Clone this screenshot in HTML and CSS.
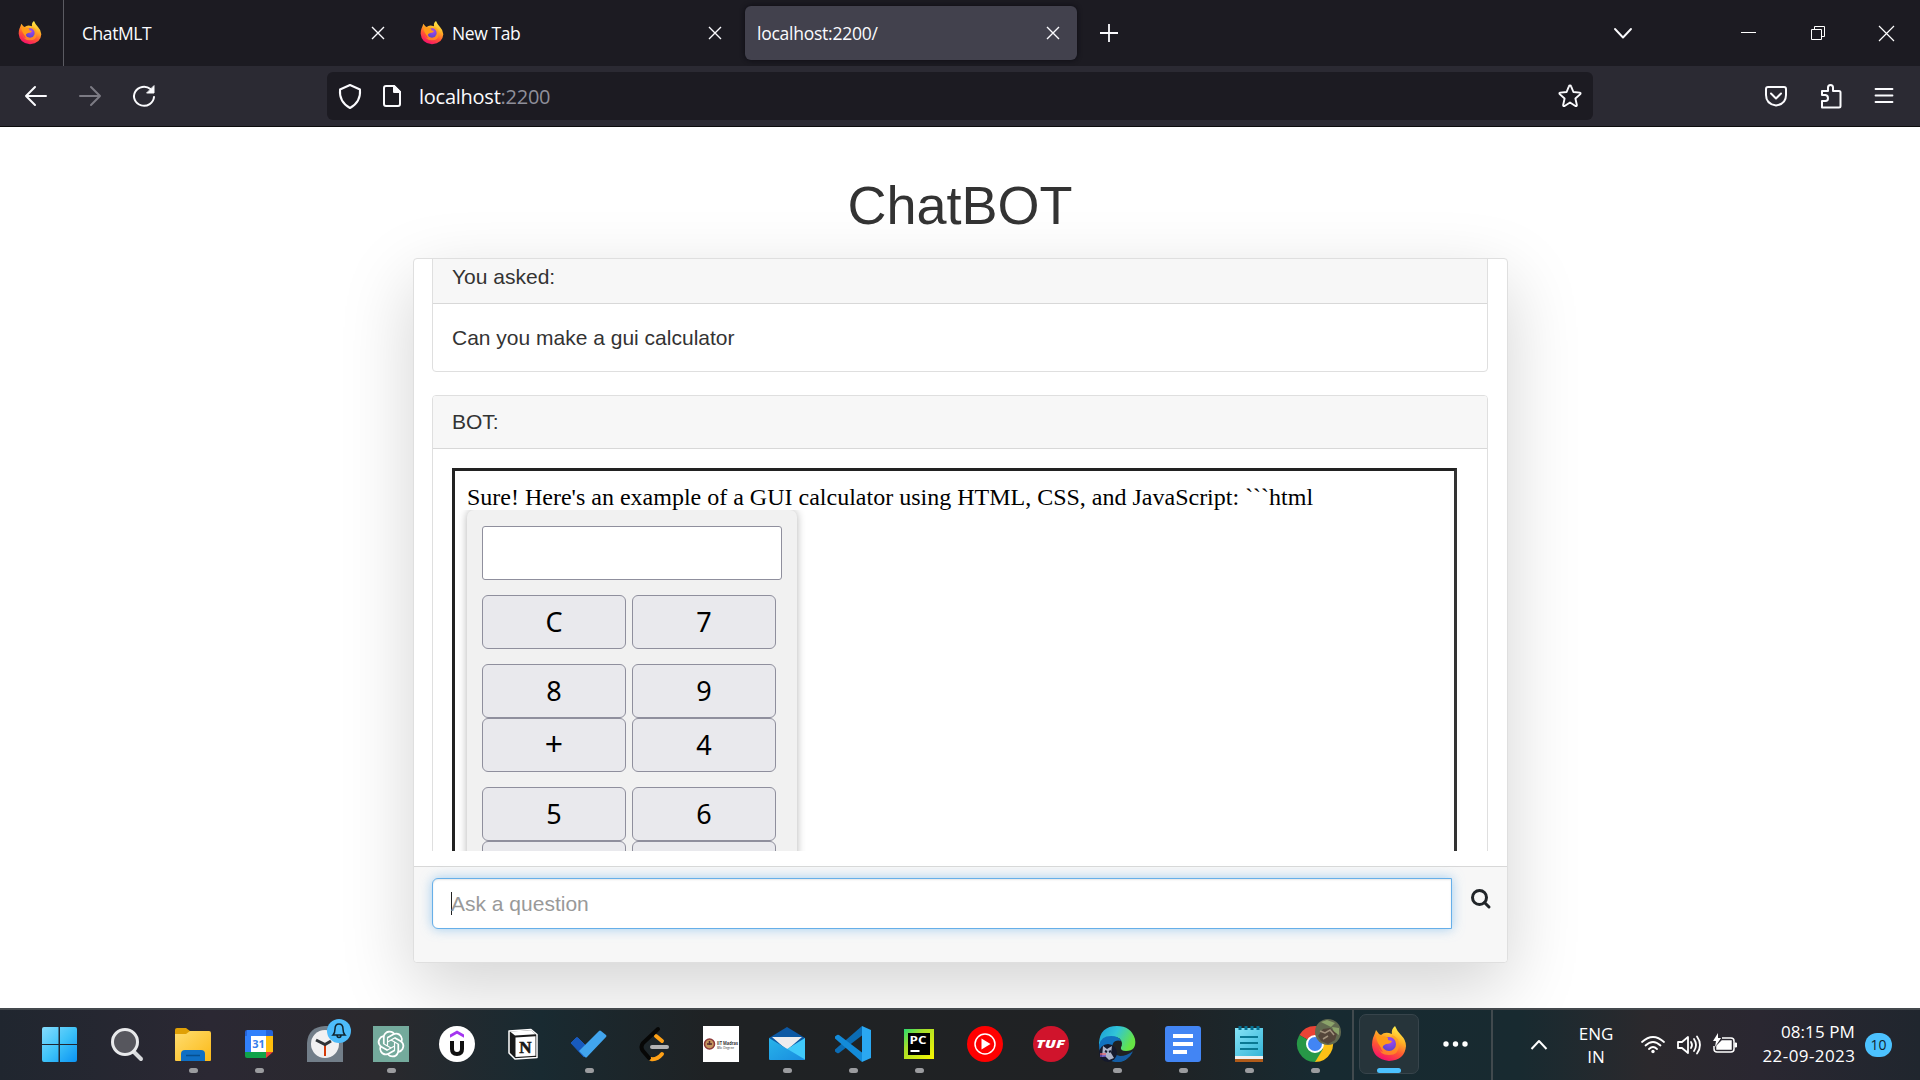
FILE: index.html
```html
<!DOCTYPE html>
<html lang="en">
<head>
<meta charset="utf-8">
<title>ChatBOT</title>
<link rel="stylesheet" href="styles.css">
</head>
<body>
<svg class="defs" width="0" height="0" aria-hidden="true">
  <defs>
    <linearGradient id="ffBody" x1=".75" y1="0" x2=".3" y2="1"><stop offset="0" stop-color="#fff44f"/><stop offset=".35" stop-color="#ffb025"/><stop offset=".65" stop-color="#ff5634"/><stop offset="1" stop-color="#f50970"/></linearGradient>
    <radialGradient id="ffGlobe" cx=".6" cy=".3" r=".8"><stop offset="0" stop-color="#a646f5"/><stop offset="1" stop-color="#5146c4"/></radialGradient>
    <linearGradient id="win" x1="0" y1="0" x2="1" y2="1"><stop offset="0" stop-color="#86dcfd"/><stop offset=".5" stop-color="#3fc3f8"/><stop offset="1" stop-color="#0a93f3"/></linearGradient>
    <linearGradient id="fold" x1="0" y1="0" x2="1" y2="1"><stop offset="0" stop-color="#ffdd70"/><stop offset="1" stop-color="#fbb917"/></linearGradient>
    <linearGradient id="edgeTop" x1="0" y1="0" x2="1" y2=".4"><stop offset="0" stop-color="#199bd8"/><stop offset=".5" stop-color="#31c5d8"/><stop offset="1" stop-color="#65e445"/></linearGradient>
    <linearGradient id="mailA" x1="0" y1="0" x2="1" y2="1"><stop offset="0" stop-color="#28b4ea"/><stop offset="1" stop-color="#198cdf"/></linearGradient>
    <linearGradient id="note" x1="0" y1="0" x2="1" y2="1"><stop offset="0" stop-color="#86e3f6"/><stop offset="1" stop-color="#35b5d8"/></linearGradient>
    <linearGradient id="pc" x1="0" y1="0" x2="1" y2="1"><stop offset="0" stop-color="#27dc70"/><stop offset=".35" stop-color="#a8df29"/><stop offset="1" stop-color="#faf500"/></linearGradient>
    <symbol id="firefox" viewBox="0 0 36 36">
      <path d="M2 12 4 7l1-3 3 4 2 1q3-3 8-2l3 1q-1-5 3-8 2 5 6 9 5 5 5 11-1 14-17 15Q2 33 1 19q0-4 1-7z" fill="url(#ffBody)"/>
      <path d="M21 9q7 2 7 10 0 10-10 10Q8 29 7 19q1 6 5 7-5-7-1-12 5 3 9-1z" fill="#ff9b20" opacity=".7"/>
      <circle cx="18" cy="18" r="7" fill="url(#ffGlobe)"/>
      <path d="M5 9q3 0 6 2 3-2 6 1l0 2 4 1q-1 3-6 3-3 1-4 4-5-4-6-12z" fill="#ff9b17"/>
    </symbol>
    <symbol id="close" viewBox="0 0 14 14"><path d="M1 1 13 13M13 1 1 13" fill="none" stroke="#fbfbfe" stroke-width="1.4"/></symbol>
  </defs>
</svg>

<header class="browser">
  <div class="tabs">
    <div class="pinned"><svg class="favicon"><use href="#firefox"/></svg></div>
    <div class="tab tab-first"><span class="tab-title t1">ChatMLT</span><svg class="x"><use href="#close"/></svg></div>
    <div class="tab tab-second"><svg class="favicon"><use href="#firefox"/></svg><span class="tab-title t2">New Tab</span><svg class="x"><use href="#close"/></svg></div>
    <div class="tab tab-active"><span class="tab-title t3">localhost:2200/</span><svg class="x"><use href="#close"/></svg></div>
    <svg class="plus" width="20" height="20" fill="none" stroke="#fbfbfe" stroke-width="1.8"><path d="M10 1v18M1 10h18"/></svg>
    <div class="window-controls">
      <svg width="20" height="20" fill="none" stroke="#fbfbfe" stroke-width="1.9" stroke-linecap="round" stroke-linejoin="round"><path d="m2 6 8 8.500 8-8.500"/></svg>
      <svg class="minimize" width="16" height="20" stroke="#fff"><path d="M0 9.500h15"/></svg>
      <svg class="restore" width="16" height="16" fill="none" stroke="#fff"><path d="M1.500 4.500h10v10h-10zM4.500 4V1.500h10v10H12"/></svg>
      <svg class="win-close" width="17" height="17" fill="none" stroke="#fff" stroke-width="1.200"><path d="m1 1 15 15M16 1 1 16"/></svg>
    </div>
  </div>
  <div class="toolbar">
    <div class="nav">
      <svg width="24" height="24" fill="none" stroke="#fbfbfe" stroke-width="2" stroke-linecap="round" stroke-linejoin="round"><path d="M22 12H2m9-9-9 9 9 9"/></svg>
      <svg width="24" height="24" fill="none" stroke="#7c7b84" stroke-width="2" stroke-linecap="round" stroke-linejoin="round"><path d="M2 12h20m-9-9 9 9-9 9"/></svg>
      <svg width="24" height="24" fill="none" stroke="#fbfbfe" stroke-width="2" stroke-linecap="round"><path d="M22 13a10 9.500 0 1 1-3.500-8"/><path d="M22 2v7h-7z" fill="#fbfbfe" stroke-width="1"/></svg>
    </div>
    <div class="urlbar">
      <svg width="24" height="26" fill="none" stroke="#fbfbfe" stroke-width="2" stroke-linejoin="round"><path d="M12 2 22 6.500Q23 19 12 25 1 19 2 6.500z"/></svg>
      <svg class="page-icon" width="20" height="24" fill="none" stroke="#fbfbfe" stroke-width="2" stroke-linejoin="round"><path d="M4 2h8l6 6v12q0 2-2 2H4q-2 0-2-2V4q0-2 2-2z"/><path d="M12 2v6h6z" fill="#fbfbfe"/></svg>
      <div class="address">localhost<span>:2200</span></div>
      <svg class="star" width="26" height="26" fill="none" stroke="#fbfbfe" stroke-width="1.900" stroke-linejoin="round"><path d="M13 2.500q.8 0 1.100.8l2.300 5.700 6.400.6q1.300.4.500 1.500l-4.900 4.400 1.500 6.700q-.2 1.300-1.500.8L13 19.500 7.600 23q-1.300.5-1.500-.8l1.500-6.700-4.900-4.400q-.8-1.100.5-1.500L9.600 9l2.300-5.700q.3-.8 1.100-.8z"/></svg>
    </div>
    <div class="tools">
      <svg width="24" height="24" fill="none" stroke="#fbfbfe" stroke-width="2" stroke-linecap="round" stroke-linejoin="round"><path d="M4 3h16q2 0 2 2v6q0 9-10 10.500Q2 20 2 11V5q0-2 2-2z"/><path d="m7 9.500 5 5 5-5"/></svg>
      <svg width="24" height="26" fill="none" stroke="#fbfbfe" stroke-width="2" stroke-linejoin="round"><path d="M3 24.500V18h3.500q2.500 0 2.500-2.800T6.500 12H3V8h6V4.500Q9 2 11.500 2T14 4.500V8h6q1.500 0 1.500 1.500v13.500q0 1.500-1.500 1.500z"/></svg>
      <svg width="20" height="20" stroke="#fbfbfe" stroke-width="1.800" stroke-linecap="round"><path d="M1.500 3h17M1.500 9.500h17M1.500 16h17"/></svg>
    </div>
  </div>
</header>

<main class="page">
  <h1>ChatBOT</h1>
  <section class="chat">
    <div class="messages">
      <article class="message">
        <div class="message-head">You asked:</div>
        <div class="message-body question">Can you make a gui calculator</div>
      </article>
      <article class="message">
        <div class="message-head">BOT:</div>
        <div class="message-body">
          <div class="preview">
            <p>Sure! Here's an example of a GUI calculator using HTML, CSS, and JavaScript: ```html</p>
            <div class="calculator">
              <div class="display"></div>
              <div class="keys first"><span>C</span><span>7</span></div>
              <div class="keys"><span>8</span><span>9</span><span class="operator">+</span><span>4</span></div>
              <div class="keys"><span>5</span><span>6</span><span></span><span></span></div>
            </div>
          </div>
        </div>
      </article>
    </div>
    <footer class="ask">
      <div class="ask-input"><i class="caret"></i><span>Ask a question</span></div>
      <svg width="22" height="22" fill="none" stroke="#212529" stroke-width="3" stroke-linecap="round"><circle cx="9.500" cy="8.500" r="7"/><path d="m14.500 13.500 4.500 4.500"/></svg>
    </footer>
  </section>
</main>

<nav class="taskbar">
  <div class="apps">
    <div class="app start"><svg viewBox="0 0 36 36"><path d="M0 2q0-2 2-2h14.500v17H0zM18 0h15q2 0 2 2v15H18zM0 18h16.500v17H2q-2 0-2-2zM18 18h17v15q0 2-2 2H18z" fill="url(#win)"/></svg></div>
    <div class="app"><svg viewBox="0 0 36 36"><path d="m24 25 8 8" stroke="#d8dadd" stroke-width="4" stroke-linecap="round"/><circle cx="16" cy="16" r="12.500" fill="#56565d" stroke="#e8e9eb" stroke-width="3"/></svg></div>
    <div class="app running"><svg viewBox="0 0 36 36"><path d="M0 4q0-2 2-2h9l4 3v6H0z" fill="#e0a006"/><path d="M0 8h11l4-3h19q2 0 2 2v27q0 1-1 1H1q-1 0-1-1z" fill="url(#fold)"/><path d="M6 35v-7q0-4 4-4h16q4 0 4 4v7z" fill="#0f6fc4"/><path d="M11 29.500h14" stroke="#064f8f" stroke-width="1.500"/></svg></div>
    <div class="app running"><svg viewBox="0 0 36 36"><path d="M4 6q0-2 2-2h24q2 0 2 2v4H4z" fill="#2463d8"/><path d="M4 10h7v16H4zM6 4h19v7H6z" fill="#3180fb"/><path d="M25 10h7v16h-7z" fill="#ffbe0c"/><path d="M4 26h21v6H6q-2 0-2-2z" fill="#10a34a"/><path d="M25 26h7l-7 6z" fill="#ea4335"/><path d="M10 10h15v16H10z" fill="#fff"/><text x="17.500" y="22" font-size="11" font-weight="700" fill="#3880ed" text-anchor="middle">31</text></svg></div>
    <div class="app"><svg viewBox="0 0 36 36"><path d="M0 17Q1 1 18 0t18 17v19H0z" fill="#727e89"/><circle cx="18" cy="18" r="14" fill="#f1f1f2"/><path d="M18 19v11" stroke="#d73a08" stroke-width="2"/><path d="m9 14 9 4.500L24 15" fill="none" stroke="#303438" stroke-width="3"/></svg><svg class="bell" viewBox="0 0 24 24"><circle cx="12" cy="12" r="12" fill="#4dbcfb"/><path d="M6 16q2-2 2-6 0-5 4-5t4 5q0 4 2 6zM10 16q0 2.500 2 2.500t2-2.500" fill="none" stroke="#10242f" stroke-width="1.500"/></svg></div>
    <div class="app running"><svg viewBox="0 0 36 36"><path fill="#74aa9c" d="M0 0h36v36H0z"/><path transform="translate(4.700 4.700) scale(1.110)" fill="#fff" d="M22.2819 9.8211a5.9847 5.9847 0 0 0-.5157-4.9108 6.0462 6.0462 0 0 0-6.5098-2.9A6.0651 6.0651 0 0 0 4.9807 4.1818a5.9847 5.9847 0 0 0-3.9977 2.9 6.0462 6.0462 0 0 0 .7427 7.0966 5.98 5.98 0 0 0 .511 4.9107 6.051 6.051 0 0 0 6.5146 2.9001A5.9847 5.9847 0 0 0 13.2599 24a6.0557 6.0557 0 0 0 5.7718-4.2058 5.9894 5.9894 0 0 0 3.9977-2.9001 6.0557 6.0557 0 0 0-.7475-7.0729zm-9.022 12.6081a4.4755 4.4755 0 0 1-2.8764-1.0408l.1419-.0804 4.7783-2.7582a.7948.7948 0 0 0 .3927-.6813v-6.7369l2.02 1.1686a.071.071 0 0 1 .038.052v5.5826a4.504 4.504 0 0 1-4.4945 4.4944zm-9.6607-4.1254a4.4708 4.4708 0 0 1-.5346-3.0137l.142.0852 4.783 2.7582a.7712.7712 0 0 0 .7806 0l5.8428-3.3685v2.3324a.0804.0804 0 0 1-.0332.0615L9.74 19.9502a4.4992 4.4992 0 0 1-6.1408-1.6464zM2.3408 7.8956a4.485 4.485 0 0 1 2.3655-1.9728V11.6a.7664.7664 0 0 0 .3879.6765l5.8144 3.3543-2.0201 1.1685a.0757.0757 0 0 1-.071 0l-4.8303-2.7865A4.504 4.504 0 0 1 2.3408 7.872zm16.5963 3.8558L13.1038 8.364 15.1192 7.2a.0757.0757 0 0 1 .071 0l4.8303 2.7913a4.4944 4.4944 0 0 1-.6765 8.1042v-5.6772a.79.79 0 0 0-.407-.667zm2.0107-3.0231l-.142-.0852-4.7735-2.7818a.7759.7759 0 0 0-.7854 0L9.409 9.2297V6.8974a.0662.0662 0 0 1 .0284-.0615l4.8303-2.7866a4.4992 4.4992 0 0 1 6.6802 4.66zM8.3065 12.863l-2.02-1.1638a.0804.0804 0 0 1-.038-.0567V6.0742a4.4992 4.4992 0 0 1 7.3757-3.4537l-.142.0805L8.704 5.459a.7948.7948 0 0 0-.3927.6813zm1.0976-2.3654l2.602-1.4998 2.6069 1.4998v2.9994l-2.5974 1.4997-2.6067-1.4997Z"/></svg></div>
    <div class="app"><svg viewBox="0 0 36 36"><circle cx="18" cy="18" r="18" fill="#fff"/><path d="m11 8.500 7-4 7 4v3.300l-7-4-7 4z" fill="#a435f0"/><path d="M13 15v8q0 5 5 5t5-5v-8" fill="none" stroke="#111" stroke-width="4"/></svg></div>
    <div class="app"><svg viewBox="0 0 36 36"><path d="m4 5 22-1.500 6 5v23l-22 1.500-6-6z" fill="#191919" stroke="#fff" stroke-width="1.500" stroke-linejoin="round"/><path d="m5 5.500 21-1.300 4.500 4L10 9.500z" fill="#fff"/><path d="m10.500 11.500 20-1.300v19.600l-20 1.300z" fill="#fff"/><text x="20.500" y="26.500" class="serif" font-size="17" font-weight="700" fill="#191919" stroke="#191919" stroke-width=".6" text-anchor="middle">N</text></svg></div>
    <div class="app running"><svg viewBox="0 0 36 36"><path d="m0 17 5-5q1-1 2 0l11 11-5 8z" fill="#185abd" stroke="#185abd" stroke-linejoin="round"/><path d="m8 25 20-20q1-1 2 0l5 4q1 1 0 2L16 31q-1 1-2 0z" fill="#41a5ee"/></svg></div>
    <div class="app"><svg viewBox="0 0 36 36" fill="none" stroke-linecap="round"><path d="m19 10 6 5M14 33q6 1 11-5" stroke="#ffa116" stroke-width="4"/><path d="M21 3 6 17q-3 4 0 8l6 7" stroke="#070706" stroke-width="4"/><path d="M15 21h15" stroke="#b3b3b3" stroke-width="4"/></svg></div>
    <div class="app"><svg viewBox="0 0 36 36"><path fill="#fff" d="M0 0h36v36H0z"/><circle cx="6.500" cy="18" r="5" fill="#c5965d" stroke="#8d3939" stroke-width="1.500"/><path d="M4 18h5M6.500 15v4" stroke="#572a33" stroke-width="1.500"/><text x="14" y="19" font-size="4.800" font-weight="700" fill="#333" textLength="21" lengthAdjust="spacingAndGlyphs">IIT Madras</text><text x="14" y="22.500" font-size="3.300" fill="#333" textLength="17" lengthAdjust="spacingAndGlyphs">BSc Degree</text></svg></div>
    <div class="app running"><svg viewBox="0 0 36 36"><path d="M0 12 18 1l18 11v8H0z" fill="#0c59a4"/><path d="M3 11h30L18 24z" fill="#ececee"/><path d="M36 12v21q0 1-1 1H1L18 23z" fill="#40cafa"/><path d="m0 12 36 21.500q-1 .5-2 .5H1q-1 0-1-1z" fill="url(#mailA)"/></svg></div>
    <div class="app running"><svg viewBox="0 0 36 36"><path d="M27 0 0 23.500v2L2 27q1 .5 2 0L27 9.500z" fill="#0b6cb4"/><path d="M27 36 0 12.500v-2L2 9q1-.5 2 0l23 17.500z" fill="#138bd9"/><path d="m27 0 9 4v28l-9 4z" fill="#2aa8f2"/></svg></div>
    <div class="app running"><svg viewBox="0 0 36 36"><path fill="url(#pc)" d="M3 3h30v30H3z"/><path d="M7 7h22v22H7z"/><text x="8.500" y="18" font-size="11" font-weight="700" fill="#fff" textLength="17" lengthAdjust="spacingAndGlyphs">PC</text><path d="M9.500 25h9" stroke="#fff" stroke-width="2"/></svg></div>
    <div class="app"><svg viewBox="0 0 36 36"><circle cx="18" cy="18" r="18" fill="red"/><circle cx="18" cy="18" r="10" fill="none" stroke="#fff" stroke-width="1.500"/><path d="m14.500 12.500 9 5.500-9 5.500z" fill="#fff"/></svg></div>
    <div class="app"><svg viewBox="0 0 36 36"><circle cx="18" cy="18" r="18" fill="#d0142c"/><text x="3" y="21.800" font-size="11" font-weight="800" font-style="italic" fill="#fff" textLength="29" lengthAdjust="spacingAndGlyphs">TUF</text></svg></div>
    <div class="app running"><svg viewBox="0 0 36 36"><path d="M0 17Q1 0 18 0q14 0 18 13 2 12-9 12-6 0-5-4 1-1 1-4-1-6-8-6Q3 11 0 20z" fill="url(#edgeTop)"/><path d="M0 19q2-9 12-9 8 0 10 5-8-2-9 6-1 9 8 11 6 1 13-6Q27 37 17 36 0 34 0 19z" fill="#1272bf"/><path d="M13 21q0 8 8 9 7 0 13-5-6 12-17 11-8-4-4-15z" fill="#155da5"/><circle cx="9" cy="27" r="9" fill="#151a2d"/><path d="m4 20 4 3 5-3-1 7 3 5-5 2-4-4-3 1z" fill="#aeb4c8"/><path d="m6 25 2 1m2 0 2-1" stroke="#151a2d" stroke-width="2"/><path d="m1 28 6 0" stroke="#e06a78" stroke-width="1.500"/><path d="M1 30h6" stroke="#6c56c9" stroke-width="1.500"/></svg></div>
    <div class="app running"><svg viewBox="0 0 36 36"><rect width="36" height="36" rx="3" fill="#4285f4"/><path d="M8 10h20M8 18h20M8 26h14" stroke="#fff" stroke-width="4"/></svg></div>
    <div class="app running"><svg viewBox="0 0 36 36"><path d="M4 33h28v3H4z" fill="#b05b19"/><path d="M4 2h28v31H4z" fill="#f0f0f0"/><path d="M4 2h28v28H4z" fill="url(#note)"/><path d="M9 0v4m6-4v4m6-4v4m6-4v4" stroke="#067091" stroke-width="3"/><path d="M9 11h18M9 17h18M9 23h18" stroke="#0a7893" stroke-width="2"/></svg></div>
    <div class="app running"><svg viewBox="0 0 36 36"><path d="M18 18 2.400 9A18 18 0 0 1 33.600 9z" fill="#ea4335"/><path d="M18 18 33.600 9A18 18 0 0 1 18 36z" fill="#fbc116"/><path d="M2.400 9A18 18 0 0 0 18 36l8-13-8-5z" fill="#279847"/><path d="M18 9h15.600L26 23z" fill="#fbc116"/><circle cx="18" cy="18" r="8" fill="#4285f4" stroke="#fff" stroke-width="2"/></svg><svg class="avatar" viewBox="0 0 26 26"><circle cx="13" cy="13" r="13" fill="#626a50"/><path d="m6 3 6-2 8 3-4 4zM17 8l7 1v7l-5-3z" fill="#8ba36a"/><path d="m3 17 5-7 7-1 7 6-2 6-7 4-7-3z" fill="#55463b"/><path d="m5 12 5 2 5-3 4 5M8 20l5-3" fill="none" stroke="#a2927e" stroke-width="1.500"/></svg></div>
  </div>
  <div class="active-app"><div class="app-tile"><svg viewBox="0 0 36 36"><use href="#firefox"/></svg></div>
    <svg class="dots" width="26" height="8" fill="#fff"><circle cx="4" cy="4" r="2.700"/><circle cx="13.500" cy="4" r="2.700"/><circle cx="23" cy="4" r="2.700"/></svg>
  </div>
  <div class="tray">
    <svg class="up" width="18" height="12" fill="none" stroke="#fff" stroke-width="2" stroke-linejoin="round"><path d="m1.500 10 7.500-8 7.500 8"/></svg>
    <div class="language">ENG<br>IN</div>
    <svg class="wifi" width="26" height="24" fill="none" stroke="#fff" stroke-width="1.800" stroke-linecap="round"><path d="M2 9q11-10 22 0M5.500 12.500q7.500-7 15 0M9 16q4-4 8 0"/><circle cx="13" cy="18.500" r="1.700" fill="#fff" stroke="none"/></svg>
    <svg class="sound" width="26" height="24" fill="none" stroke="#fff" stroke-width="1.800" stroke-linecap="round" stroke-linejoin="round"><path d="M2 9h4l6-5v16l-6-5H2zM15 9q2 3 0 6M18 6q4 6 0 12M21 3.500q6 8.500 0 17"/></svg>
    <svg class="battery" width="26" height="24" fill="none" stroke="#fff" stroke-width="1.500"><path d="M10 5h9q3 0 3 3v8q0 3-3 3H5q-3 0-3-3v-3"/><path d="M10 8h9v8H5v-3z" fill="#fff"/><path d="M23 10v4h1.500v-4z" fill="#fff" stroke-width="1"/><path d="M6 0 1 8h3l-1 6 6-9H6z" fill="#fff" stroke="none"/></svg>
    <div class="clock">08:15 PM<br><span>22-09-2023</span></div>
    <div class="badge">10</div>
  </div>
</nav>
</body>
</html>
```

FILE: styles.css
```css
* { box-sizing: border-box; }
body {
  margin: 0;
  width: 1920px;
  height: 1080px;
  overflow: hidden;
  display: flex;
  flex-direction: column;
  background: #fff;
  font-family: "Liberation Sans", Arial, sans-serif;
  font-size: 21px;
  color: #333;
}
svg { display: block; flex: none; overflow: visible; }
.defs { position: absolute; }

/* Browser window */
.browser {
  flex: none;
  height: 127px;
  color: #fbfbfe;
  background: #2b2a33;
  border-bottom: 1px solid #0c0c0d;
  font-family: "Open Sans", "Noto Sans", sans-serif;
}
.tabs { height: 66px; display: flex; align-items: center; background: #1c1b22; }
.pinned { width: 64px; height: 66px; padding: 21px 0 0 18px; border-right: 1px solid #5b5b62; }
.favicon { width: 24px; height: 24px; }
.tab { height: 54px; display: flex; align-items: center; font-size: 17.500px; white-space: nowrap; }
.tab .x { width: 14px; height: 14px; margin-left: auto; }
.tab-first { width: 341px; padding: 0 20px 0 18px; }
.tab-second { width: 340px; padding: 0 23px 0 15px; gap: 8px; }
.tab-active { width: 332px; padding: 0 17px 0 12px; border-radius: 6px; background: #42414d; box-shadow: 0 0 5px #0c0b12; }
.t1 { letter-spacing: -.45px; }
.t2 { letter-spacing: -.4px; }
.t3 { letter-spacing: -.25px; }
.plus { margin-left: 22px; }
.window-controls { margin-left: auto; padding-right: 25px; display: flex; align-items: center; }
.minimize { margin-left: 108px; }
.restore { margin-left: 53px; }
.win-close { margin-left: 52px; }
.toolbar { height: 60px; display: flex; align-items: center; }
.nav { width: 327px; padding-left: 24px; display: flex; gap: 30px; }
.urlbar { width: 1266px; height: 48px; padding: 0 10px 0 11px; display: flex; align-items: center; border-radius: 6px; background: #1c1b22; }
.page-icon { margin-left: 20px; }
.address { margin-left: 17px; font-size: 20px; letter-spacing: -.25px; }
.address span { color: #8f8f9a; }
.star { margin-left: auto; }
.tools { margin-left: auto; padding-right: 26px; display: flex; align-items: center; gap: 31px; }

/* Chat page */
.page { height: 881px; flex: none; overflow: hidden; }
h1 { margin: 48px 0 0; height: 60px; line-height: 60px; font-size: 54px; font-weight: 400; text-align: center; }
.chat {
  width: 1095px;
  height: 705px;
  margin: 23px auto 0 413px;
  display: flex;
  flex-direction: column;
  background: #fff;
  border: 1px solid #dfdfdf;
  border-radius: 4px;
  box-shadow: 0 24px 72px rgba(0, 0, 0, .175);
}
.messages { height: 592px; flex: none; margin: 0 19px 0 18px; overflow: hidden; }
.message { border: 1px solid #dfdfdf; border-radius: 4px; margin-bottom: 23px; overflow: hidden; }
.message:first-child { margin-top: -9px; }
.message-head { height: 53px; padding-left: 19px; line-height: 52px; background: #f7f7f7; border-bottom: 1px solid #d8d8d8; }
.message-body { padding: 19px 30px 0 19px; }
.message-body.question { height: 67px; padding: 0 19px; line-height: 67px; }
.preview { height: 900px; padding: 12px; border: 3px solid #222; border-right-color: #333; color: #000; font-family: "Liberation Serif", "Times New Roman", serif; font-size: 24px; }
.preview p { margin: 0; height: 27px; line-height: 28px; white-space: nowrap; }
.calculator { width: 330px; height: 800px; padding: 16px 15px; border-radius: 7px; background: #f1f1f1; box-shadow: 0 0 8px rgba(0, 0, 0, .3); position: relative; clip-path: inset(0 -12px 0 -12px); }
.display { height: 54px; border: 1px solid #8f8f9d; border-radius: 3px; background: #fff; }
.keys { display: grid; grid-template-columns: 144px 144px; column-gap: 6px; margin-top: 15px; font-family: "Noto Sans", "Open Sans", sans-serif; font-size: 27px; }
.keys span { height: 54px; line-height: 52px; text-align: center; border: 1px solid #8f8f9d; border-radius: 6px; background: #e9e9ed; }
.keys .operator { font-size: 32px; line-height: 50px; }
.ask { margin-top: 15px; flex: 1; padding: 11px 15px 0 18px; display: flex; align-items: flex-start; background: #f7f7f7; border-top: 1px solid #d8d8d8; border-radius: 0 0 4px 4px; }
.ask-input {
  flex: none;
  width: 1020px;
  height: 51px;
  padding-left: 18px;
  display: flex;
  align-items: center;
  color: #999;
  background: #fff;
  border: 1px solid #66afe9;
  border-radius: 6px 0 0 6px;
  box-shadow: inset 0 1px 2px rgba(0, 0, 0, .1), 0 0 12px rgba(102, 175, 233, .6);
}
.caret { width: 1px; height: 23px; margin-right: -1px; background: #222; }
.ask svg { margin: 11px 0 0 18px; }

/* Desktop taskbar */
.taskbar {
  height: 72px;
  flex: none;
  display: flex;
  color: #fff;
  border-top: 2px solid #44494d;
  background: linear-gradient(90deg, #20262f 0, #2b2833 210px, #2a292d 380px, #192a31 540px, #1f2224 710px, #202224 1150px, #172a31 1320px, #182a30 1520px, #2b292d 1650px, #2a2731 1760px, #20262e 1920px);
  font-family: "Open Sans", "Noto Sans", sans-serif;
}
.apps { display: flex; width: 1352px; padding-left: 28px; }
.app { width: 66px; height: 70px; display: flex; flex-direction: column; align-items: center; padding-top: 16px; position: relative; }
.app.start { padding-right: 2px; padding-top: 17px; }
.app svg { width: 36px; height: 36px; }
.app.running::after { content: ""; width: 9px; height: 5px; margin-top: 6px; border-radius: 3px; background: #9b9c9f; }
.app svg.bell { width: 24px; height: 24px; position: absolute; left: 35px; top: 9px; }
.app svg.avatar { width: 26px; height: 26px; position: absolute; left: 33px; top: 9px; }
.serif { font-family: "Liberation Serif", serif; }
.active-app { width: 141px; padding: 4px 23px 0 5px; display: flex; justify-content: space-between; border-left: 2px solid #414a4e; border-right: 2px solid #414a4e; }
.app-tile { width: 60px; height: 60px; padding-top: 11px; display: flex; flex-direction: column; align-items: center; border: 1px solid #37444b; border-radius: 7px; background: #26343a; }
.app-tile svg { width: 36px; height: 36px; }
.app-tile::after { content: ""; width: 24px; height: 5px; margin-top: 6px; border-radius: 3px; background: #4cc2ff; }
.dots { margin-top: 26px; }
.tray { flex: 1; display: flex; align-items: center; padding-right: 28px; }
.up { margin-left: 37px; }
.language { width: 60px; margin-left: 18px; font-size: 17px; line-height: 23px; text-align: center; }
.wifi { margin-left: 14px; }
.sound { margin-left: 10px; }
.battery { margin-left: 10px; }
.clock { margin-left: auto; font-size: 17px; line-height: 24px; text-align: right; white-space: nowrap; padding-bottom: 2px; letter-spacing: .1px; }
.clock span { letter-spacing: .42px; margin-right: -.4px; }
.badge { width: 27px; height: 24px; margin-left: 10px; border-radius: 12px; background: #4cc2ff; color: #12242e; font-size: 14px; line-height: 24px; text-align: center; }
```
